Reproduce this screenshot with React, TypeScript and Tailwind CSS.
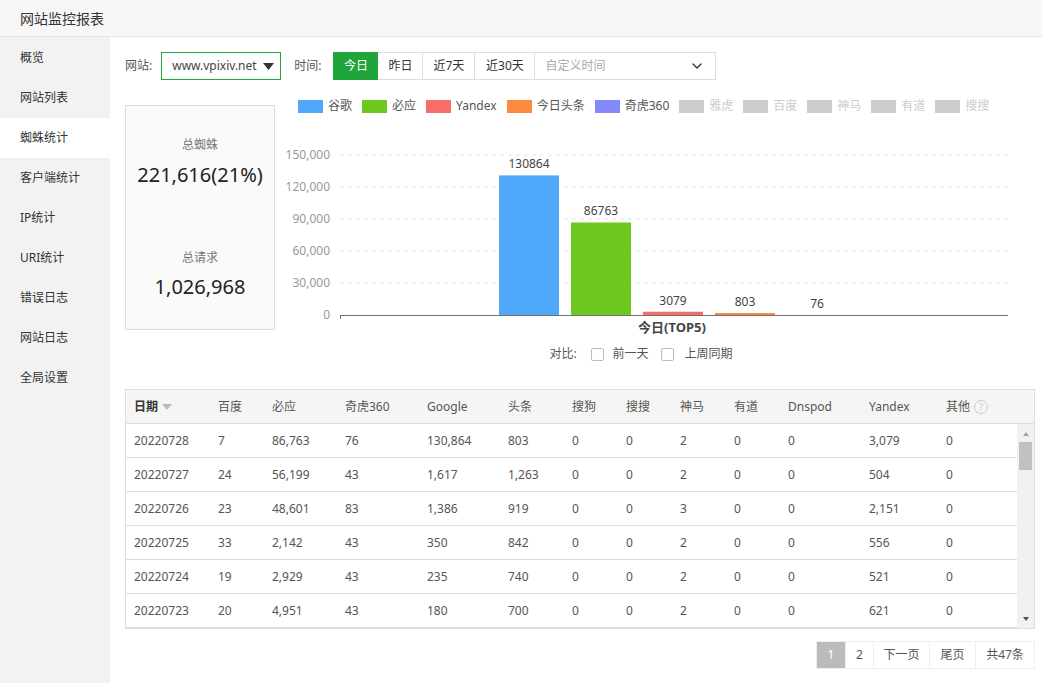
import { ChevronDown } from 'lucide-react'

// Spider statistics page of the site monitor report. Static data, one file.

const menu = ['概览', '网站列表', '蜘蛛统计', '客户端统计', 'IP统计', 'URI统计', '错误日志', '网站日志', '全局设置']

const legend = [
  { name: '谷歌', color: '#4fa8f9', on: true },
  { name: '必应', color: '#6ec71e', on: true },
  { name: 'Yandex', color: '#f56e6a', on: true },
  { name: '今日头条', color: '#fc8b40', on: true },
  { name: '奇虎360', color: '#818af8', on: true },
  { name: '雅虎', color: '#cccccc', on: false },
  { name: '百度', color: '#cccccc', on: false },
  { name: '神马', color: '#cccccc', on: false },
  { name: '有道', color: '#cccccc', on: false },
  { name: '搜搜', color: '#cccccc', on: false },
]

const bars = [
  { value: 130864, color: '#4fa8f9' },
  { value: 86763, color: '#6ec71e' },
  { value: 3079, color: '#f56e6a' },
  { value: 803, color: '#fc8b40' },
  { value: 76, color: '#818af8' },
]

const cols = [
  { label: '日期', w: 'w-[84px]' },
  { label: '百度', w: 'w-[54px]' },
  { label: '必应', w: 'w-[73px]' },
  { label: '奇虎360', w: 'w-[82px]' },
  { label: 'Google', w: 'w-[81px]' },
  { label: '头条', w: 'w-[64px]' },
  { label: '搜狗', w: 'w-[54px]' },
  { label: '搜搜', w: 'w-[54px]' },
  { label: '神马', w: 'w-[54px]' },
  { label: '有道', w: 'w-[54px]' },
  { label: 'Dnspod', w: 'w-[81px]' },
  { label: 'Yandex', w: 'w-[77px]' },
  { label: '其他', w: 'flex-1' },
]

const rows = [
  ['20220728', '7', '86,763', '76', '130,864', '803', '0', '0', '2', '0', '0', '3,079', '0'],
  ['20220727', '24', '56,199', '43', '1,617', '1,263', '0', '0', '2', '0', '0', '504', '0'],
  ['20220726', '23', '48,601', '83', '1,386', '919', '0', '0', '3', '0', '0', '2,151', '0'],
  ['20220725', '33', '2,142', '43', '350', '842', '0', '0', '2', '0', '0', '556', '0'],
  ['20220724', '19', '2,929', '43', '235', '740', '0', '0', '2', '0', '0', '521', '0'],
  ['20220723', '20', '4,951', '43', '180', '700', '0', '0', '2', '0', '0', '621', '0'],
]

const ticks = [150000, 120000, 90000, 60000, 30000, 0]

function Chart() {
  const base = 195
  const scale = 160 / 150000
  return (
    <svg width={740} height={218} className="block">
      {ticks.map((t) => {
        const y = base - t * scale
        return (
          <g key={t}>
            {t > 0 ? (
              <line x1={60} x2={728} y1={y} y2={y} stroke="#e0e6f1" strokeDasharray="4 4" />
            ) : null}
            <text x={50} y={y + 4} textAnchor="end" fontSize={12} fill="#999">
              {t.toLocaleString('en-US')}
            </text>
          </g>
        )
      })}
      {bars.map((b, i) => {
        const cx = 249 + i * 72
        const h = b.value > 500 ? Math.max(b.value * scale, 2) : 0
        return (
          <g key={i}>
            {h > 0 ? <rect x={cx - 30} y={base - h} width={60} height={h} fill={b.color} /> : null}
            <text x={cx} y={base - h - 7} textAnchor="middle" fontSize={12} fill="#444">
              {b.value}
            </text>
          </g>
        )
      })}
      <line x1={60} x2={728} y1={base + 0.5} y2={base + 0.5} stroke="#6e7079" />
      <line x1={60.5} x2={60.5} y1={base} y2={base + 4} stroke="#6e7079" />
      <text x={392} y={212} textAnchor="middle" fontSize={13} fontWeight={700} fill="#444">
        今日(TOP5)
      </text>
    </svg>
  )
}

export default function App() {
  return (
    <div
      className="w-[1042px] h-[683px] overflow-hidden bg-white text-[#333] flex flex-col"
      style={{ fontFamily: '"Noto Sans", "Noto Sans CJK SC", sans-serif' }}
    >
      <div className="h-[37px] shrink-0 bg-[#f7f7f7] border-b border-[#e6e6e6] flex items-center px-5 text-[14px] text-[#333]">
        网站监控报表
      </div>
      <div className="flex flex-1 min-h-0">
        <ul className="w-[110px] shrink-0 bg-[#f2f2f2] pt-px">
          {menu.map((m) => (
            <li
              key={m}
              className={`h-10 flex items-center px-5 text-[12px] ${m === '蜘蛛统计' ? 'bg-white' : ''}`}
            >
              {m}
            </li>
          ))}
        </ul>
        <div className="flex-1 pl-[15px] pr-[7px] pt-[15px] text-[12px]">
          <div className="flex items-center h-7">
            <span className="mr-[9px] text-[#555]">网站:</span>
            <div className="w-[120px] h-7 border border-[#20a53a] flex items-center justify-between pl-[10px] pr-[6px] text-[12px] text-[#444]">
              <span>www.vpixiv.net</span>
              <svg width="11" height="7" viewBox="0 0 11 7">
                <path d="M0 0 H11 L5.5 7 Z" fill="#333" />
              </svg>
            </div>
            <span className="ml-[13px] mr-[12px] text-[#555]">时间:</span>
            <div className="flex h-7 text-[12px]">
              <button className="w-[45px] bg-[#20a53a] text-white border border-[#20a53a]">今日</button>
              <button className="w-[45px] border border-l-0 border-[#ddd]">昨日</button>
              <button className="w-[52px] border border-l-0 border-[#ddd]">近7天</button>
              <button className="w-[60px] border border-l-0 border-[#ddd]">近30天</button>
              <div className="w-[181px] border border-l-0 border-[#ddd] flex items-center justify-between pl-[10px] pr-[10px] text-[#aaa] text-[12px]">
                <span>自定义时间</span>
                <ChevronDown size={16} strokeWidth={2} color="#333" />
              </div>
            </div>
          </div>

          <div className="flex mt-[18px]">
            <div className="w-[150px] h-[225px] mt-[7px] shrink-0 bg-[#fafafa] border border-[#ddd] flex flex-col items-center pt-[30px]">
              <div className="text-[12px] text-[#777]">总蜘蛛</div>
              <div className="text-[20px] text-[#222] mt-[7px] leading-7">221,616(21%)</div>
              <div className="text-[12px] text-[#777] mt-[60px]">总请求</div>
              <div className="text-[20px] text-[#222] mt-[6px] leading-7">1,026,968</div>
            </div>
            <div className="flex flex-col ml-[5px]">
              <div className="flex items-center h-4 pl-[18px] gap-[10px]">
                {legend.map((l) => (
                  <div key={l.name} className="flex items-center gap-[5px]">
                    <span className="w-[25px] h-[13px]" style={{ background: l.color }} />
                    <span className={`text-[12px] ${l.on ? 'text-[#555]' : 'text-[#ccc]'}`}>{l.name}</span>
                  </div>
                ))}
              </div>
              <div className="mt-[6px]">
                <Chart />
              </div>
              <div className="flex items-center justify-center pr-[18px] text-[12px] text-[#555] mt-[7px]">
                <span>对比:</span>
                <span className="w-[13px] h-[13px] border border-[#bbb] rounded-[2px] ml-[14px]" />
                <span className="ml-[9px]">前一天</span>
                <span className="w-[13px] h-[13px] border border-[#bbb] rounded-[2px] ml-[12px]" />
                <span className="ml-[11px]">上周同期</span>
              </div>
            </div>
          </div>

          <div className="mt-[26px] border border-[#ddd] w-[910px]">
            <div className="flex h-[34px] items-center bg-[#f5f5f5] border-b border-[#ddd] pl-2 text-[#555]">
              {cols.map((c, i) => (
                <div key={c.label} className={`${c.w} flex items-center gap-[4px] ${i === 0 ? 'font-bold text-[#333]' : ''}`}>
                  {c.label}
                  {i === 0 ? (
                    <svg width="10" height="6" viewBox="0 0 10 6">
                      <path d="M0 0 H10 L5 6 Z" fill="#bbb" />
                    </svg>
                  ) : null}
                  {c.label === '其他' ? (
                    <span className="w-[14px] h-[14px] rounded-full border border-[#ccc] text-[#ccc] text-[10px] flex items-center justify-center leading-none">
                      ?
                    </span>
                  ) : null}
                </div>
              ))}
            </div>
            <div className="flex h-[204px] overflow-hidden">
              <div className="flex-1">
                {rows.map((r) => (
                  <div key={r[0]} className="flex h-[34px] items-center border-b border-[#ddd] pl-2 text-[#555]">
                    {r.map((v, i) => (
                      <div key={i} className={cols[i].w}>
                        {v}
                      </div>
                    ))}
                  </div>
                ))}
              </div>
              <div className="w-[17px] bg-[#f1f1f1] flex flex-col items-center">
                <svg width="8" height="14" viewBox="0 0 8 14" className="mt-[3px]">
                  <path d="M1 9 L7 9 L4 5 Z" fill="#a3a3a3" />
                </svg>
                <div className="w-[13px] h-[28px] bg-[#c1c1c1] mt-[1px]" />
                <div className="flex-1" />
                <svg width="8" height="14" viewBox="0 0 8 14" className="mb-[2px]">
                  <path d="M1 5 L7 5 L4 9 Z" fill="#505050" />
                </svg>
              </div>
            </div>
          </div>

          <div className="flex justify-end mt-[12px] text-[12px] text-[#555]">
            <div className="flex h-7 border border-[#eee]">
              <span className="w-[28px] flex items-center justify-center bg-[#bbb] text-white">1</span>
              <span className="w-[28px] flex items-center justify-center border-l border-[#eee]">2</span>
              <span className="w-[56px] flex items-center justify-center border-l border-[#eee]">下一页</span>
              <span className="w-[46px] flex items-center justify-center border-l border-[#eee]">尾页</span>
              <span className="w-[59px] flex items-center justify-center border-l border-[#eee]">共47条</span>
            </div>
          </div>
        </div>
      </div>
    </div>
  )
}
